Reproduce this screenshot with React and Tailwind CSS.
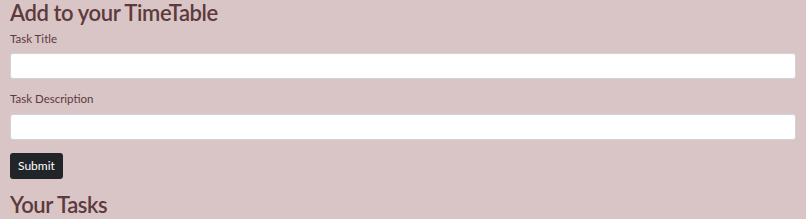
export default function App() {
  return (
    <div className="min-h-screen bg-[#d9c5c5] px-[10px] pt-px font-['Lato',sans-serif] text-[#5c3a3d]">
      <h2 className="text-[22px] font-semibold leading-[24px] tracking-[-0.4px]">Add to your TimeTable</h2>

      <form className="flex flex-col" onSubmit={(e) => e.preventDefault()}>
        <label htmlFor="title" className="mt-[5px] text-[11.5px] leading-[17px]">
          Task Title
        </label>
        <input
          id="title"
          type="text"
          className="mt-[6px] h-[26px] w-full rounded-[3px] border border-[#ced4da] bg-white px-2 text-[11px] outline-none"
        />

        <label htmlFor="desc" className="mt-[11px] text-[11.5px] leading-[17px]">
          Task Description
        </label>
        <input
          id="desc"
          type="text"
          className="mt-[7px] h-[26px] w-full rounded-[3px] border border-[#ced4da] bg-white px-2 text-[11px] outline-none"
        />

        <div className="mt-[12px]">
          <button
            type="submit"
            className="h-[26px] rounded-[3px] bg-[#212529] px-[8px] text-[12px] text-white"
          >
            Submit
          </button>
        </div>
      </form>

      <h2 className="mt-[14px] text-[22px] font-semibold leading-[24px] tracking-[-0.4px]">Your Tasks</h2>
    </div>
  );
}
